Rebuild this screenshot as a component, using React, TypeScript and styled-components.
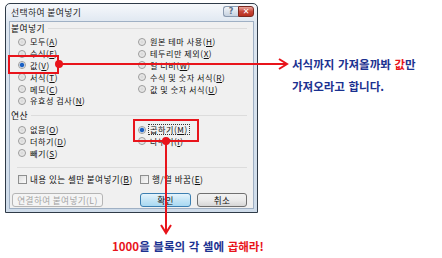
import React from 'react'
import styled, { createGlobalStyle } from 'styled-components'

const RED = '#e8141b'
const NAVY = '#1b3190'

const GlobalStyle = createGlobalStyle`
  html, body { margin: 0; padding: 0; background: #fff; }
  body { font-family: "Noto Sans CJK KR", "Noto Sans", sans-serif; }
  * { box-sizing: border-box; }
`

type Item = { label: string; key: string; rest?: string; checked?: boolean; focus?: boolean }

const pasteLeft: Item[] = [
  { label: '모두(', key: 'A', rest: ')' },
  { label: '수식(', key: 'F', rest: ')' },
  { label: '값(', key: 'V', rest: ')', checked: true },
  { label: '서식(', key: 'T', rest: ')' },
  { label: '메모(', key: 'C', rest: ')' },
  { label: '유효성 검사(', key: 'N', rest: ')' },
]

const pasteRight: Item[] = [
  { label: '원본 테마 사용(', key: 'H', rest: ')' },
  { label: '테두리만 제외(', key: 'X', rest: ')' },
  { label: '열 너비(', key: 'W', rest: ')' },
  { label: '수식 및 숫자 서식(', key: 'R', rest: ')' },
  { label: '값 및 숫자 서식(', key: 'U', rest: ')' },
]

const opLeft: Item[] = [
  { label: '없음(', key: 'O', rest: ')' },
  { label: '더하기(', key: 'D', rest: ')' },
  { label: '빼기(', key: 'S', rest: ')' },
]

const opRight: Item[] = [
  { label: '곱하기(', key: 'M', rest: ')', checked: true, focus: true },
  { label: '나누기(', key: 'I', rest: ')' },
]

function Radio({ item }: { item: Item }) {
  return (
    <Row>
      <RadioDot $checked={!!item.checked} />
      <Label $focus={!!item.focus}>
        {item.label}
        <u>{item.key}</u>
        {item.rest}
      </Label>
    </Row>
  )
}

export default function App() {
  return (
    <>
      <GlobalStyle />
      <Page>
        <Window>
          <TitleBar>
            <Title>선택하여 붙여넣기</Title>
            <Caption>
              <HelpButton>?</HelpButton>
              <CloseButton>✕</CloseButton>
            </Caption>
          </TitleBar>
          <Body>
            <GroupTitle>붙여넣기</GroupTitle>
            <Columns>
              <Column>
                {pasteLeft.map((it) => (
                  <Radio key={it.key} item={it} />
                ))}
              </Column>
              <Column>
                {pasteRight.map((it) => (
                  <Radio key={it.key} item={it} />
                ))}
              </Column>
            </Columns>
            <GroupTitle $top={3}>연산</GroupTitle>
            <Columns>
              <Column>
                {opLeft.map((it) => (
                  <Radio key={it.key} item={it} />
                ))}
              </Column>
              <Column>
                {opRight.map((it) => (
                  <Radio key={it.key} item={it} />
                ))}
              </Column>
            </Columns>
            <Divider />
            <CheckRow>
              <CheckItem>
                <Box />
                <span>
                  내용 있는 셀만 붙여넣기(<u>B</u>)
                </span>
              </CheckItem>
              <CheckItem>
                <Box />
                <span>
                  행/열 바꿈(<u>E</u>)
                </span>
              </CheckItem>
            </CheckRow>
            <ButtonRow>
              <Button $w={91} $disabled>
                연결하여 붙여넣기(L)
              </Button>
              <Spacer />
              <Button $w={51} $primary>
                확인
              </Button>
              <Button $w={50}>취소</Button>
            </ButtonRow>
          </Body>
        </Window>

        <Callout>
          <p>
            서식까지 가져올까봐 <Hot>값</Hot>만
          </p>
          <p>가져오라고 합니다.</p>
        </Callout>

        <Note>
          <Hot>1000</Hot>을 블록의 각 셀에 <Hot>곱해라!</Hot>
        </Note>

        <Marks width="442" height="258" viewBox="0 0 442 258">
          <g fill="none" stroke={RED} strokeWidth="2">
            <rect x="9" y="56" width="49" height="17" />
            <rect x="134" y="120" width="64" height="21" />
            <line x1="59" y1="64" x2="286" y2="64" />
            <polyline points="279,59 287,64 279,69" />
            <line x1="166" y1="141" x2="166" y2="232" />
            <polyline points="161,225 166,233 171,225" />
          </g>
          <circle cx="59" cy="64" r="4" fill={RED} />
          <circle cx="166" cy="141" r="4" fill={RED} />
        </Marks>
      </Page>
    </>
  )
}

// styles

const Page = styled.div`
  position: relative;
  width: 442px;
  height: 258px;
  display: grid;
  grid-template-columns: 258px 1fr;
  grid-template-rows: 213px 1fr;
  overflow: hidden;
`

const Window = styled.div`
  margin: 3px 0 0 5px;
  width: 253px;
  height: 210px;
  border: 1px solid #2f3b48;
  border-radius: 5px 5px 0 0;
  background: linear-gradient(#f6f8fb, #dde6f0 20px, #cfdcea);
  padding: 0 3px 3px;
  display: flex;
  flex-direction: column;
`

const TitleBar = styled.div`
  height: 17px;
  flex: 0 0 17px;
  display: flex;
  align-items: center;
  justify-content: space-between;
  padding-left: 2px;
`

const Title = styled.span`
  font-size: 8.8px;
  color: #1c1c1c;
  letter-spacing: 0.4px;
`

const Caption = styled.div`
  display: flex;
  align-self: flex-start;
  margin-top: 2px;
`

const HelpButton = styled.span`
  width: 15px;
  height: 11px;
  border: 1px solid #8b9bb0;
  border-right: none;
  border-radius: 3px 0 0 3px;
  background: linear-gradient(#f2f5f9, #c6d2e0);
  color: #5c6f88;
  font: bold 8px/9px "DejaVu Sans", sans-serif;
  text-align: center;
`

const CloseButton = styled.span`
  width: 16px;
  height: 11px;
  border: 1px solid #7a2a22;
  border-radius: 0 3px 3px 0;
  background: linear-gradient(#e9a79c, #c7473a 50%, #b8301f);
  color: #fff;
  font: bold 8px/9px "DejaVu Sans", sans-serif;
  text-align: center;
`

const Body = styled.div`
  flex: 1;
  background: #f0f0f0;
  border: 1px solid #9fb0c4;
  padding: 0 6px 0 1px;
  display: flex;
  flex-direction: column;
  font-size: 8.6px;
  letter-spacing: 0.4px;
  color: #111;
`

const GroupTitle = styled.div<{ $top?: number }>`
  display: flex;
  align-items: center;
  gap: 3px;
  height: 12px;
  margin-top: ${(p) => p.$top ?? 0}px;
  font-size: 8.8px;
  color: #111;

  &::after {
    content: '';
    flex: 1;
    height: 1px;
    background: #dcdcdc;
  }
`

const Columns = styled.div`
  display: grid;
  grid-template-columns: 120px 1fr;
  padding-left: 7px;
  margin-top: 2px;
`

const Column = styled.div`
  display: flex;
  flex-direction: column;
`

const Row = styled.div`
  height: 11.8px;
  display: flex;
  align-items: center;
  gap: 3px;
  white-space: nowrap;
  font-size: 8.1px;
  letter-spacing: 0.55px;
  line-height: 9px;
`

const RadioDot = styled.span<{ $checked: boolean }>`
  width: 8px;
  height: 8px;
  border-radius: 50%;
  border: 1px solid #9a9a9a;
  background: ${(p) =>
    p.$checked
      ? 'radial-gradient(circle, #1a5fc2 0 1.6px, #6fa0e0 2.2px, #f4f4f4 2.8px)'
      : 'radial-gradient(circle, #d6d6d6, #f6f6f6)'};
  flex: 0 0 auto;
`

const Label = styled.span<{ $focus: boolean }>`
  padding: 0 1px;
  border: 1px dotted ${(p) => (p.$focus ? '#333' : 'transparent')};
  margin-left: -1px;
`

const Divider = styled.div`
  height: 1px;
  background: #dcdcdc;
  margin: 8px 0 5px 6px;
`

const CheckRow = styled.div`
  display: grid;
  grid-template-columns: 122px 1fr;
  padding-left: 7px;
  height: 12px;
  align-items: center;
`

const CheckItem = styled.div`
  display: flex;
  align-items: center;
  gap: 3px;
  white-space: nowrap;
`

const Box = styled.span`
  width: 9px;
  height: 9px;
  border: 1px solid #8e8f8f;
  background: linear-gradient(135deg, #dedede, #fbfbfb);
`

const ButtonRow = styled.div`
  display: flex;
  gap: 6px;
  margin-top: 8px;
`

const Spacer = styled.div`
  flex: 1;
`

const Button = styled.div<{ $w: number; $primary?: boolean; $disabled?: boolean }>`
  width: ${(p) => p.$w}px;
  height: 14px;
  border: 1px solid ${(p) => (p.$disabled ? '#b5b5b5' : p.$primary ? '#3c7fb1' : '#707070')};
  border-radius: 3px;
  background: ${(p) =>
    p.$disabled
      ? '#f4f4f4'
      : p.$primary
        ? 'linear-gradient(#e5f4fc, #c4e5f6 50%, #a9d9f2)'
        : 'linear-gradient(#f2f2f2, #ebebeb 50%, #d6d6d6)'};
  color: ${(p) => (p.$disabled ? '#a3a3a3' : '#111')};
  font-size: 8.6px;
  line-height: 12px;
  text-align: center;
  white-space: nowrap;
  margin-left: ${(p) => (p.$disabled ? '1px' : '0')};
`

const Callout = styled.div`
  padding: 54px 0 0 34px;
  color: ${NAVY};
  font-size: 11.5px;
  font-weight: bold;
  word-spacing: 1px;

  p {
    margin: 0;
    height: 22px;
    line-height: 20px;
    white-space: nowrap;
  }
`

const Note = styled.div`
  grid-column: 1 / -1;
  padding: 25px 0 0 112px;
  color: ${NAVY};
  font-size: 11.5px;
  font-weight: bold;
  word-spacing: 1px;
  white-space: nowrap;
`

const Hot = styled.span`
  color: ${RED};
`

const Marks = styled.svg`
  position: absolute;
  left: 0;
  top: 0;
  pointer-events: none;
`
